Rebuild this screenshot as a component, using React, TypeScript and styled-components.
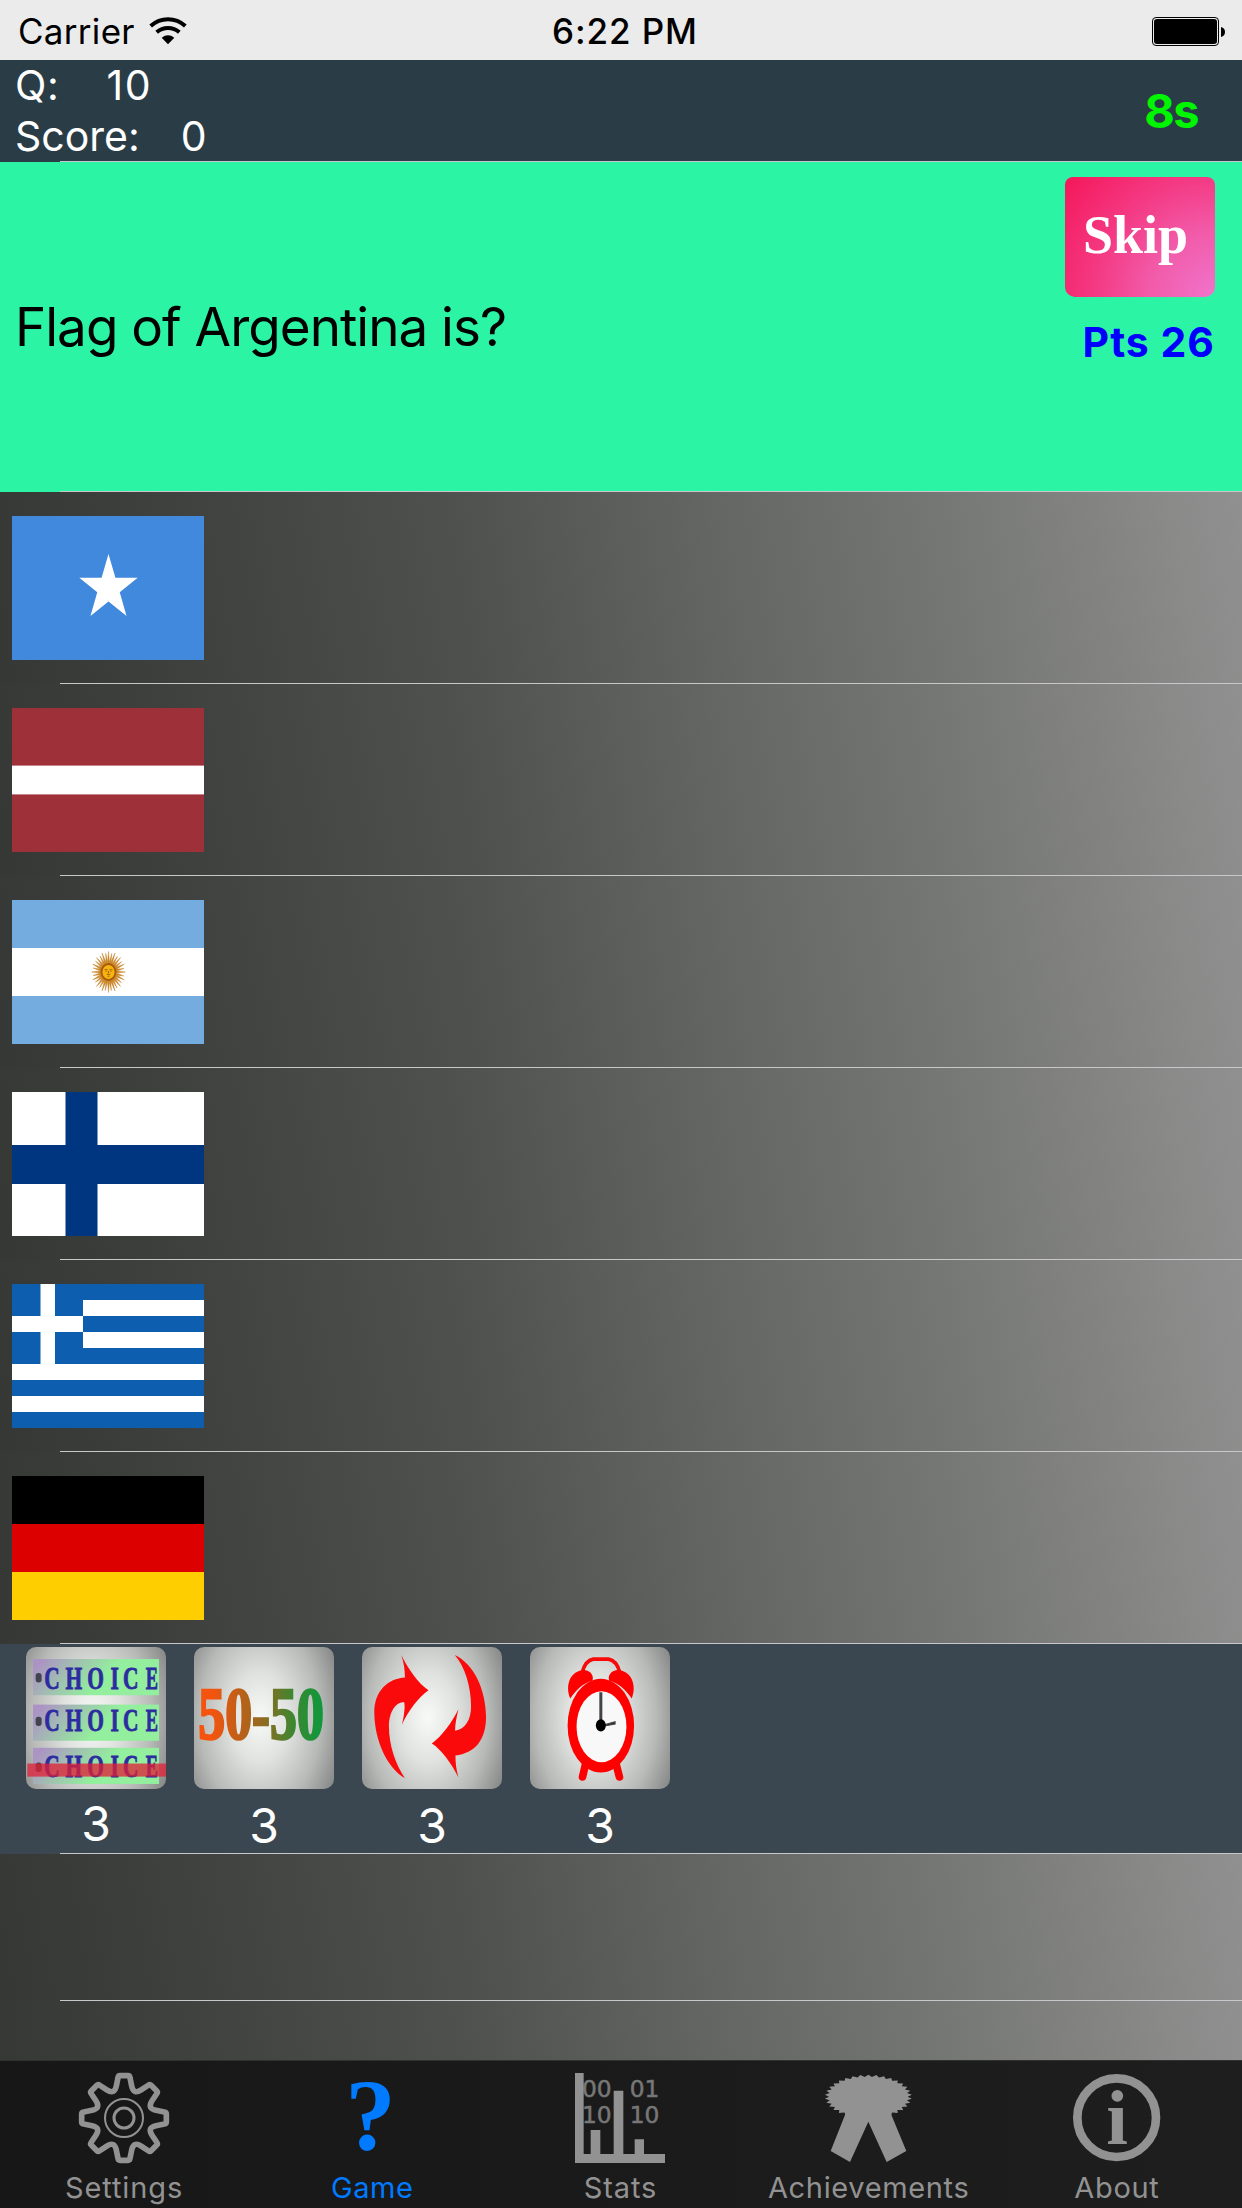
import React from "react";
import styled, { createGlobalStyle } from "styled-components";

const sans = `Inter, "Liberation Sans", sans-serif`;
const serif = `"Liberation Serif", serif`;
const grey = "#929292";
const blue = "#007aff";

const GlobalStyle = createGlobalStyle`
  *, *::before, *::after { box-sizing: border-box; }
  body { margin: 0; background: #363836; }
`;

const Screen = styled.div`
  width: 1242px;
  height: 2208px;
  display: flex;
  flex-direction: column;
  overflow: hidden;
  font-family: ${sans};
  background: #363836;
`;

const StatusBar = styled.div`
  height: 60px;
  flex: none;
  display: grid;
  grid-template-columns: 1fr auto 1fr;
  align-items: center;
  padding: 2px 17px 0 18px;
  background: #ebebeb;
  color: #000;
`;

const CarrierGroup = styled.div`
  display: flex;
  align-items: center;
  gap: 14px;
`;

const Clock = styled.div`
  padding-left: 7px;
`;

const BatteryGroup = styled.div`
  display: flex;
  justify-content: flex-end;
`;

const Label = styled.span<{ size: number; weight?: number; spacing?: number; color?: string; lh?: number }>`
  display: block;
  white-space: pre;
  font-size: ${(p) => p.size}px;
  font-weight: ${(p) => p.weight ?? 400};
  letter-spacing: ${(p) => p.spacing ?? 0}px;
  line-height: ${(p) => p.lh ?? p.size}px;
  color: ${(p) => p.color ?? "inherit"};
`;

const Separator = styled.div`
  height: 1px;
  flex: none;
  margin-left: 60px;
  background: #c8c7cc;
`;

const Row = styled.section<{ height: number; fill?: string }>`
  height: ${(p) => p.height}px;
  flex: none;
  display: flex;
  flex-direction: column;
  background: ${(p) =>
    p.fill ??
    "linear-gradient(80deg, #363836 0%, #3a3c3a 8%, #424442 20%, #4f514f 38%, #646664 58%, #747674 75%, #838482 88%, #909090 100%)"};
`;

const RowBody = styled.div`
  flex: 1;
  min-height: 0;
  display: flex;
`;

const HeaderBody = styled(RowBody)`
  align-items: center;
  justify-content: space-between;
  padding: 0 44px 0 15px;
  color: #fff;
`;

const Counters = styled.div`
  display: flex;
  flex-direction: column;
`;

const Counter = styled.div<{ gap: number }>`
  display: flex;
  gap: ${(p) => p.gap}px;
`;

const QuestionBody = styled(RowBody)`
  justify-content: space-between;
  padding: 15px 27px 0 15px;
`;

const QuestionText = styled.div`
  padding-top: 117px;
  color: #000;
`;

const SkipColumn = styled.div`
  display: flex;
  flex-direction: column;
  align-items: flex-end;
  gap: 20px;
`;

const SkipButton = styled.button`
  width: 150px;
  height: 120px;
  border: 0;
  border-radius: 8px 8px 10px 10px;
  padding: 0 9px 5px 0;
  font: 700 54px/60px ${serif};
  color: #fff;
  background: radial-gradient(circle at 100% 100%, #f074cc 0%, #f25aa8 35%, #f43a84 62%, #f51659 100%);
`;

const Answer = styled(RowBody)`
  align-items: center;
  padding-left: 12px;
`;

const PowerBody = styled(RowBody)`
  gap: 28px;
  padding: 3px 0 0 26px;
`;

const PowerUp = styled.div<{ gap: number }>`
  display: flex;
  flex-direction: column;
  align-items: center;
  gap: ${(p) => p.gap}px;
  color: #fff;
`;

const Tile = styled.div`
  width: 140px;
  height: 142px;
  border-radius: 10px;
  overflow: hidden;
  background: radial-gradient(ellipse 60% 90% at 47% 50%, #f8faf8 0%, #e0e2e0 35%, #b8bab8 72%, #8a8c8b 100%);
  svg { display: block; }
`;

const TabBar = styled.nav`
  height: 148px;
  flex: none;
  display: grid;
  grid-template-columns: repeat(5, 1fr);
  padding-right: 1px;
  border-top: 1px solid #303130;
  background: linear-gradient(90deg, #171717, #1e1e1e);
`;

const Tab = styled.div<{ active?: boolean }>`
  display: flex;
  flex-direction: column;
  align-items: center;
  gap: 7px;
  padding-top: 12px;
  color: ${(p) => (p.active ? blue : grey)};
  svg { display: block; overflow: visible; }
`;

const LastRow = styled.div`
  height: 59px;
  flex: none;
  overflow: hidden;
`;

const WifiIcon = () => (
  <svg width="38" height="28" viewBox="0 0 114 84">
    <g fill="none" stroke="#000" strokeWidth="12">
      <path d="M5 27 C35 0 79 0 109 27" />
      <path d="M23 46 C42 29 72 29 91 46" />
    </g>
    <path d="M38 62 Q57 48 76 62 L57 82 Z" />
  </svg>
);

const BatteryIcon = () => (
  <svg width="73" height="29" viewBox="0 0 73 29">
    <rect x="0.5" y="0.5" width="66" height="28" rx="3.5" fill="none" stroke="#000" />
    <rect x="2" y="2" width="63" height="25" rx="3" />
    <path d="M69 10 Q73 11 73 15 Q73 19 69 20 Z" />
  </svg>
);

const starPoints = Array.from({ length: 10 }, (_, i) => {
  const r = i % 2 ? 11.8 : 30.7;
  const a = (Math.PI * i) / 5;
  return `${96.5 + r * Math.sin(a)},${72.3 - r * 1.117 * Math.cos(a)}`;
}).join(" ");

const FlagSvg = ({ children }: { children: React.ReactNode }) => (
  <svg width="192" height="144" viewBox="0 0 192 144">
    {children}
  </svg>
);

const Somalia = () => (
  <FlagSvg>
    <rect width="192" height="144" fill="#4189dd" />
    <polygon points={starPoints} fill="#fff" />
  </FlagSvg>
);

const Latvia = () => (
  <FlagSvg>
    <rect width="192" height="144" fill="#9e3039" />
    <rect y="57.6" width="192" height="28.8" fill="#fff" />
  </FlagSvg>
);

const Argentina = () => (
  <FlagSvg>
    <rect width="192" height="144" fill="#74acdf" />
    <rect y="48" width="192" height="48" fill="#fff" />
    <g transform="translate(96.5 72)">
      {Array.from({ length: 32 }, (_, i) => (
        <path
          key={i}
          d={i % 2 ? "M-1.2 -8 L0.3 -19 L1.2 -8 Z" : "M-1.3 -8 L0 -20.5 L1.3 -8 Z"}
          fill="#cf8a2a"
          stroke="#c07a1c"
          strokeWidth="0.4"
          transform={`scale(0.83 1) rotate(${i * 11.25})`}
        />
      ))}
      <ellipse rx="7" ry="8" fill="#f6b40e" stroke="#a85a10" strokeWidth="1.8" />
      <path d="M-4 -2.4 H-1 M1 -2.4 H4 M-3 -0.8 H-1.4 M1.4 -0.8 H3 M0 -1 V1.6 M-1.8 2.4 H1.8 M-1 4.2 H1" stroke="#a2600f" strokeWidth="0.9" />
    </g>
  </FlagSvg>
);

const Finland = () => (
  <FlagSvg>
    <rect width="192" height="144" fill="#fff" />
    <path d="M53.5 0 H85.5 V144 H53.5 Z M0 53 H192 V92 H0 Z" fill="#003580" />
  </FlagSvg>
);

const Greece = () => (
  <FlagSvg>
    <rect width="192" height="144" fill="#0d5eaf" />
    <path d="M71 16 H192 V32 H71 Z M71 48 H192 V64 H71 Z M0 80 H192 V96 H0 Z M0 112 H192 V128 H0 Z M28.5 0 H43 V80 H28.5 Z M0 32 H71 V48 H0 Z" fill="#fff" />
  </FlagSvg>
);

const Germany = () => (
  <FlagSvg>
    <rect width="192" height="144" fill="#000" />
    <rect y="48" width="192" height="48" fill="#d00" />
    <rect y="96" width="192" height="48" fill="#ffce00" />
  </FlagSvg>
);

const choiceLetters: [string, number][] = [["C", 133], ["H", 197], ["O", 262], ["I", 332], ["C", 370], ["E", 438]];

const ChoiceArt = () => (
  <svg width="140" height="142" viewBox="78 52 421 424" preserveAspectRatio="none">
    <defs>
      <linearGradient id="bar" x1="0" y1="0.1" x2="1" y2="0.35">
        <stop offset="0.05" stopColor="#ab93c4" />
        <stop offset="0.3" stopColor="#a2bdb2" />
        <stop offset="0.62" stopColor="#93ee9d" />
      </linearGradient>
    </defs>
    {[88, 224, 353].map((y, i) => (
      <g key={y}>
        <rect x="99" y={y} width="379" height="108" fill="url(#bar)" />
        <rect x="107" y={[130, 260, 397][i]} width="18" height="28" rx="8" fill="#444450" />
        {choiceLetters.map(([c, x]) => (
          <text
            key={x}
            transform={`translate(${x} ${[176, 304, 441][i]}) scale(${c === "E" ? 0.6 : 0.7} 1)`}
            fontFamily="Liberation Serif"
            fontWeight="700"
            fontSize="92"
            fill="#2c2ca0"
            stroke="#2c2ca0"
            strokeWidth="2.5"
          >
            {c}
          </text>
        ))}
      </g>
    ))}
    <rect x="82" y="400" width="417" height="39" fill="#e02036" fillOpacity="0.76" />
  </svg>
);

const FiftyArt = () => (
  <svg width="140" height="142" viewBox="582 52 421 424" preserveAspectRatio="none">
    <defs>
      <linearGradient id="fifty" x1="0" y1="0" x2="1" y2="0">
        <stop offset="0.1" stopColor="#f5540f" />
        <stop offset="0.5" stopColor="#95691f" />
        <stop offset="0.75" stopColor="#3f8630" />
        <stop offset="1" stopColor="#0c993d" />
      </linearGradient>
    </defs>
    <text
      transform="translate(595 327) scale(0.73 1)"
      fontFamily="Liberation Serif"
      fontWeight="700"
      fontSize="220"
      textLength="517"
      lengthAdjust="spacingAndGlyphs"
      fill="url(#fifty)"
      stroke="url(#fifty)"
      strokeWidth="8"
    >
      50-50
    </text>
  </svg>
);

const SwapArt = () => (
  <svg width="140" height="142" viewBox="36 52 421 424" preserveAspectRatio="none">
    <g fill="#fa0a0a">
      <path d="M154 76 C172 112 205 162 236 181 C205 203 175 243 156 284 C162 260 166 235 163 217 C138 215 117 245 117 290 C117 345 137 402 165 444 C110 412 74 330 73 250 C72 182 115 146 165 143 C165 120 162 100 154 76 Z" />
      <path d="M315 76 C372 102 409 180 409 262 C409 330 375 370 317 376 C317 400 320 420 326 441 C305 400 275 358 246 340 C275 320 305 280 326 238 C320 262 316 285 316 302 C346 298 364 270 364 230 C364 170 345 110 315 76 Z" />
    </g>
  </svg>
);

const ClockArt = () => (
  <svg width="140" height="142" viewBox="540 52 421 424" preserveAspectRatio="none">
    <path d="M696 130 C703 104 716 90 730 88 H776 C791 90 804 104 811 130" fill="none" stroke="#f60a0a" strokeWidth="11" />
    <path d="M707 402 L698 440 M799 402 L809 440" stroke="#f00" strokeWidth="23" strokeLinecap="round" />
    <path d="M661 206 C645 168 660 122 704 121 C722 123 733 138 728 152 C700 160 680 178 661 206 Z" fill="#f00" />
    <path d="M846 206 C862 168 846 122 802 121 C784 123 773 138 778 152 C806 160 827 178 846 206 Z" fill="#f00" />
    <ellipse cx="753" cy="287" rx="100" ry="140" fill="#f00" />
    <ellipse cx="755" cy="290" rx="75" ry="106" fill="#f8f8f8" />
    <path d="M753 187 V285" stroke="#444" strokeWidth="9" />
    <path d="M753 287 L796 275 V282 L753 290 Z" fill="#333" stroke="#444" strokeWidth="3" />
    <ellipse cx="753" cy="286" rx="15" ry="18" fill="#000" />
  </svg>
);

const rotated = (x: number, y: number, k: number) => {
  const a = (k * Math.PI) / 4;
  const px = x * Math.cos(a) - y * Math.sin(a);
  const py = x * Math.sin(a) + y * Math.cos(a);
  return `${px.toFixed(2)} ${py.toFixed(2)}`;
};

const gearPath =
  Array.from({ length: 8 }, (_, k) =>
    [
      `${k ? "L" : "M"}${rotated(-23, -96, k)}`,
      `L${rotated(-18, -121, k)}`,
      `Q${rotated(-17, -127, k)} ${rotated(-12, -127, k)}`,
      `L${rotated(12, -127, k)}`,
      `Q${rotated(17, -127, k)} ${rotated(18, -121, k)}`,
      `L${rotated(23, -96, k)}`,
      `C${rotated(27, -78, k)} ${rotated(36, -74, k)} ${rotated(-23, -96, k + 1)}`,
    ].join(" ")
  ).join(" ") + " Z";

const GearIcon = () => (
  <svg width="90" height="90" viewBox="-135 -135 270 270" fill="none" stroke={grey}>
    <path d={gearPath} strokeWidth="17" strokeLinejoin="round" />
    <circle r="57" strokeWidth="6" />
    <circle r="30" strokeWidth="9" />
  </svg>
);

const QuestionIcon = () => (
  <svg width="90" height="90" viewBox="0 0 90 90">
    <text x="43.5" y="77" textAnchor="middle" fontFamily="Liberation Serif" fontWeight="700" fontSize="101" fill={blue}>
      ?
    </text>
  </svg>
);

const StatsIcon = () => (
  <svg width="90" height="90" viewBox="0 0 270 270" fill={grey}>
    <g fontFamily="DejaVu Sans" fontSize="70" fill="#777" stroke="#777" strokeWidth="1.5">
      <text x="21" y="71">00</text>
      <text x="164" y="71">01</text>
      <text x="21" y="151">10</text>
      <text x="164" y="151">10</text>
    </g>
    <path d="M0 0 H26 V243 H47 V171 H76 V243 H116 V53 H145 V243 H179 V199 H207 V243 H270 V270 H0 Z" />
  </svg>
);

const rosette = Array.from({ length: 68 }, (_, i) => {
  const a = (Math.PI * i) / 34;
  const k = i % 2 ? 0.9 : 1;
  return `${118 + 131 * k * Math.sin(a)},${140 - 66 * k * Math.cos(a)}`;
}).join(" ");

const AwardIcon = () => (
  <svg width="90" height="90" viewBox="-15 69 270 270" fill={grey}>
    <polygon points={rosette} />
    <polygon points="50,190 5,303 63,336 118,215 173,336 232,303 185,190" />
  </svg>
);

const InfoIcon = () => (
  <svg width="90" height="90" viewBox="0 0 270 270" fill={grey}>
    <circle cx="134" cy="134" r="118" fill="none" stroke={grey} strokeWidth="26" />
    <text x="135" y="213" textAnchor="middle" fontFamily="Liberation Serif" fontWeight="700" fontSize="234">
      i
    </text>
  </svg>
);

const flags = [Somalia, Latvia, Argentina, Finland, Greece, Germany];
const powerUps = [ChoiceArt, FiftyArt, SwapArt, ClockArt];
const tabs = [
  { name: "Settings", Icon: GearIcon, spacing: 0.9 },
  { name: "Game", Icon: QuestionIcon, spacing: 0.6, active: true },
  { name: "Stats", Icon: StatsIcon, spacing: 0.9 },
  { name: "Achievements", Icon: AwardIcon, spacing: 0.65 },
  { name: "About", Icon: InfoIcon, spacing: 0.7 },
];

export default function App() {
  return (
    <Screen>
      <GlobalStyle />
      <StatusBar>
        <CarrierGroup>
          <Label size={35} spacing={0.3}>Carrier</Label>
          <WifiIcon />
        </CarrierGroup>
        <Clock>
          <Label size={35} weight={550} spacing={0.9}>6:22 PM</Label>
        </Clock>
        <BatteryGroup>
          <BatteryIcon />
        </BatteryGroup>
      </StatusBar>

      <Row height={102} fill="#2a3d47">
        <HeaderBody>
          <Counters>
            <Counter gap={47}>
              <Label size={41} lh={51} spacing={0.6}>Q:</Label>
              <Label size={41} lh={51} spacing={1.8}>10</Label>
            </Counter>
            <Counter gap={41}>
              <Label size={41} lh={51}>Score:</Label>
              <Label size={41} lh={51}>0</Label>
            </Counter>
          </Counters>
          <Label size={47} weight={650} spacing={-1.6} color="#00f500">8s</Label>
        </HeaderBody>
        <Separator />
      </Row>

      <Row height={330} fill="#2bf5a5">
        <QuestionBody>
          <QuestionText>
            <Label size={53} lh={66} spacing={-1}>Flag of Argentina is?</Label>
          </QuestionText>
          <SkipColumn>
            <SkipButton>Skip</SkipButton>
            <Label size={41} lh={51} weight={700} spacing={1} color="#00f">Pts 26</Label>
          </SkipColumn>
        </QuestionBody>
        <Separator />
      </Row>

      {flags.map((Flag, i) => (
        <Row key={i} height={192}>
          <Answer>
            <Flag />
          </Answer>
          <Separator />
        </Row>
      ))}

      <Row height={210} fill="#3b4750">
        <PowerBody>
          {powerUps.map((Art, i) => (
            <PowerUp key={i} gap={i === 0 ? 10 : 12}>
              <Tile>
                <Art />
              </Tile>
              <Label size={48} lh={50}>3</Label>
            </PowerUp>
          ))}
        </PowerBody>
        <Separator />
      </Row>

      <Row height={147}>
        <RowBody />
        <Separator />
      </Row>
      <LastRow>
        <Row height={147} />
      </LastRow>

      <TabBar>
        {tabs.map(({ name, Icon, spacing, active }) => (
          <Tab key={name} active={active}>
            <Icon />
            <Label size={29} lh={36} spacing={spacing}>{name}</Label>
          </Tab>
        ))}
      </TabBar>
    </Screen>
  );
}
